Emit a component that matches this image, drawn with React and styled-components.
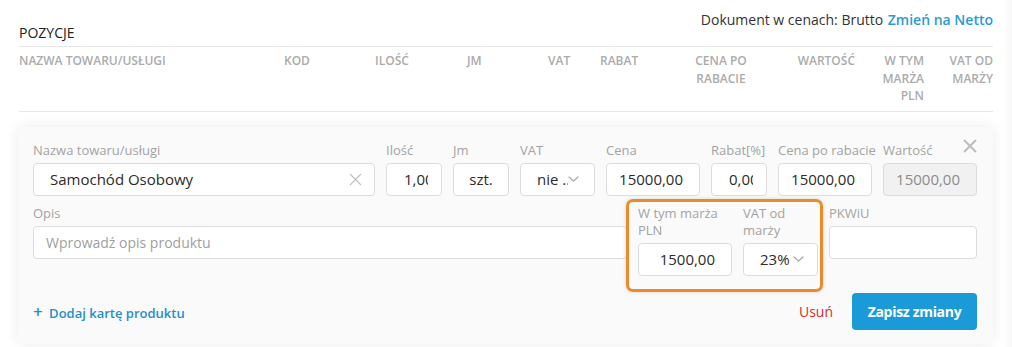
import React from "react";
import styled, { createGlobalStyle } from "styled-components";

const GlobalStyle = createGlobalStyle`
  html, body {
    margin: 0;
    padding: 0;
    background: #ffffff;
  }
  body {
    font-family: "Open Sans", "Liberation Sans", sans-serif;
    color: #333;
  }
  * {
    box-sizing: border-box;
  }
`;

const columns = [
  { title: "Nazwa towaru/usługi", align: "left" },
  { title: "Kod", align: "left" },
  { title: "Ilość", align: "left" },
  { title: "Jm", align: "left" },
  { title: "VAT", align: "left" },
  { title: "Rabat", align: "left" },
  { title: "Cena po rabacie", align: "center" },
  { title: "Wartość", align: "right" },
  { title: "W tym marża PLN", align: "right", narrow: true },
  { title: "VAT od marży", align: "right", narrow: true },
];

function CloseIcon({ size = 14, stroke = 2 }) {
  return (
    <svg width={size} height={size} viewBox="0 0 14 14" fill="none">
      <path d="M1.5 1.5 L12.5 12.5 M12.5 1.5 L1.5 12.5" stroke="currentColor" strokeWidth={stroke} strokeLinecap="round" />
    </svg>
  );
}

function Chevron() {
  return (
    <svg width="11" height="6" viewBox="0 0 11 6" fill="none">
      <path d="M1 1 L5.5 5 L10 1" stroke="currentColor" strokeWidth="1.2" strokeLinecap="round" strokeLinejoin="round" />
    </svg>
  );
}

function Field({ label, width, wrap, children }) {
  return (
    <FieldWrap $width={width}>
      <Label $wrap={wrap}>{label}</Label>
      {children}
    </FieldWrap>
  );
}

function App() {
  return (
    <Page>
      <GlobalStyle />
      <TopBar>
        <Title>POZYCJE</Title>
        <PriceMode>
          Dokument w cenach: Brutto <ModeLink>Zmień na Netto</ModeLink>
        </PriceMode>
      </TopBar>

      <HeaderRow>
        {columns.map((c) => (
          <HeaderCell key={c.title} $align={c.align} $narrow={c.narrow}>
            {c.title}
          </HeaderCell>
        ))}
      </HeaderRow>

      <Card>
        <CloseButton>
          <CloseIcon size={14} stroke={2} />
        </CloseButton>

        <FormRow>
          <Field label="Nazwa towaru/usługi" width="342px">
            <Input $align="left" $pad="0 12px 0 16px">
              <Value $grow>Samochód Osobowy</Value>
              <ClearIcon>
                <CloseIcon size={13} stroke={1.4} />
              </ClearIcon>
            </Input>
          </Field>
          <Field label="Ilość" width="56px">
            <Input $pad="0 13px 0 17px">
              <Value $clip>1,00</Value>
            </Input>
          </Field>
          <Field label="Jm" width="56px">
            <Input $align="center">
              <Value>szt.</Value>
            </Input>
          </Field>
          <Field label="VAT" width="75px">
            <Select>
              <SelectText $max="31px">nie ...</SelectText>
              <ChevronWrap $gap="0px">
                <Chevron />
              </ChevronWrap>
            </Select>
          </Field>
          <Field label="Cena" width="94px">
            <Input $align="right">
              <Value>15000,00</Value>
            </Input>
          </Field>
          <Field label="Rabat[%]" width="56px">
            <Input $pad="0 13px 0 17px">
              <Value $clip>0,00</Value>
            </Input>
          </Field>
          <Field label="Cena po rabacie" width="94px">
            <Input $align="right">
              <Value>15000,00</Value>
            </Input>
          </Field>
          <Field label="Wartość" width="94px">
            <Input $align="right" $disabled>
              <Value>15000,00</Value>
            </Input>
          </Field>
        </FormRow>

        <FormRow $spaced>
          <Field label="Opis">
            <Input $align="left" $pad="0 12px">
              <Placeholder>Wprowadź opis produktu</Placeholder>
            </Input>
          </Field>
          <MarginGroup>
            <Field label="W tym marża PLN" width="94px" wrap>
              <Input $align="right">
                <Value>1500,00</Value>
              </Input>
            </Field>
            <Field label="VAT od marży" width="75px" wrap>
              <Select>
                <SelectText>23%</SelectText>
                <ChevronWrap>
                  <Chevron />
                </ChevronWrap>
              </Select>
            </Field>
          </MarginGroup>
          <Field label="PKWiU" width="148px">
            <Input />
          </Field>
        </FormRow>

        <Footer>
          <AddLink>
            <Plus>+</Plus> Dodaj kartę produktu
          </AddLink>
          <Actions>
            <DeleteLink>Usuń</DeleteLink>
            <SaveButton>Zapisz zmiany</SaveButton>
          </Actions>
        </Footer>
      </Card>
    </Page>
  );
}

const Page = styled.div`
  width: 1012px;
  height: 347px;
  padding: 0 19px;
  overflow: hidden;
  position: relative;
  box-shadow: inset -14px 0 10px -12px rgba(0, 0, 0, 0.06);
`;

const TopBar = styled.div`
  display: flex;
  justify-content: space-between;
  height: 47px;
  padding-top: 11px;
  border-bottom: 1px solid #e6e6e6;
`;

const Title = styled.div`
  align-self: flex-end;
  margin-bottom: 4px;
  font-size: 14px;
  line-height: 18px;
  color: #222;
`;

const PriceMode = styled.div`
  align-self: flex-start;
  font-size: 14px;
  line-height: 18px;
  color: #333;
`;

const ModeLink = styled.span`
  margin-left: 1px;
  color: #2a9bd2;
  font-weight: 600;
`;

const HeaderRow = styled.div`
  display: grid;
  grid-template-columns: 265px 91px 92px 81px 52px 80px 82px 93px 69px 69px;
  padding: 5px 0 6px;
  border-bottom: 1px solid #e6e6e6;
`;

const HeaderCell = styled.div`
  font-size: 12px;
  line-height: 17.5px;
  font-weight: 600;
  text-transform: uppercase;
  color: #ababab;
  text-align: ${(p) => p.$align};
  padding-left: ${(p) => (p.$narrow ? "19px" : "0")};
`;

const Card = styled.div`
  position: relative;
  margin-top: 15px;
  margin-left: -1px;
  padding: 15px 16px 14px 15px;
  background: #fafafa;
  border-radius: 4px;
  box-shadow: 0 0 14px rgba(0, 0, 0, 0.08);
`;

const CloseButton = styled.div`
  position: absolute;
  top: 12px;
  right: 16px;
  color: #bdbdbd;
  display: flex;
`;

const FormRow = styled.div`
  display: flex;
  align-items: flex-start;
  gap: 11px;
  margin-top: ${(p) => (p.$spaced ? "9px" : "0")};
`;

const FieldWrap = styled.div`
  display: flex;
  flex-direction: column;
  ${(p) => (p.$width ? `width: ${p.$width}; flex: none;` : "flex: 1; min-width: 0;")}
`;

const Label = styled.div`
  font-size: 13px;
  line-height: 17px;
  color: #a3a3a3;
  margin-bottom: 4px;
  white-space: ${(p) => (p.$wrap ? "normal" : "nowrap")};
`;

const Input = styled.div`
  height: 33px;
  display: flex;
  align-items: center;
  justify-content: ${(p) =>
    p.$align === "right" ? "flex-end" : p.$align === "center" ? "center" : "flex-start"};
  padding: ${(p) => p.$pad || "0 16px"};
  background: ${(p) => (p.$disabled ? "#f1f1f1" : "#ffffff")};
  border: 1px solid #dcdcdc;
  border-radius: 4px;
  font-size: 15px;
  color: ${(p) => (p.$disabled ? "#8c8c8c" : "#2b2b2b")};
  overflow: hidden;
`;

const Value = styled.span`
  white-space: nowrap;
  flex: ${(p) => (p.$clip || p.$grow ? "1" : "none")};
  min-width: 0;
  overflow: ${(p) => (p.$clip ? "hidden" : "visible")};
`;

const Placeholder = styled.span`
  color: #a0a0a0;
  font-size: 14px;
  white-space: nowrap;
`;

const ClearIcon = styled.span`
  display: flex;
  color: #bdbdbd;
`;

const Select = styled.div`
  height: 33px;
  display: flex;
  align-items: center;
  padding: 0 5px 0 16px;
  background: #ffffff;
  border: 1px solid #dcdcdc;
  border-radius: 4px;
  font-size: 15px;
  color: #2b2b2b;
  overflow: hidden;
`;

const SelectText = styled.span`
  white-space: nowrap;
  overflow: hidden;
  flex: none;
  max-width: ${(p) => p.$max || "none"};
`;

const ChevronWrap = styled.span`
  display: flex;
  margin-left: ${(p) => p.$gap || "3px"};
  color: #a8a8a8;
`;

const MarginGroup = styled.div`
  position: relative;
  display: flex;
  gap: 11px;

  &::after {
    content: "";
    position: absolute;
    top: -6px;
    left: -12px;
    right: -5px;
    bottom: -16px;
    border: 3px solid #ea8a2b;
    border-radius: 7px;
    box-shadow: 0 0 4px rgba(0, 0, 0, 0.15);
    pointer-events: none;
  }
`;

const Footer = styled.div`
  display: flex;
  align-items: center;
  justify-content: space-between;
  margin-top: 17px;
`;

const AddLink = styled.div`
  font-size: 13px;
  font-weight: 600;
  color: #1f90c8;
`;

const Plus = styled.span`
  font-size: 17px;
  font-weight: 600;
  margin-right: 3px;
`;

const Actions = styled.div`
  display: flex;
  align-items: center;
  gap: 19px;
`;

const DeleteLink = styled.span`
  font-size: 14px;
  color: #d0302c;
`;

const SaveButton = styled.button`
  height: 37px;
  width: 125px;
  border: none;
  border-radius: 4px;
  background: #1a9ad6;
  color: #ffffff;
  font-family: "Open Sans", "Liberation Sans", sans-serif;
  font-size: 14px;
  font-weight: 700;
  letter-spacing: -0.3px;
  cursor: pointer;
`;

export default App;
